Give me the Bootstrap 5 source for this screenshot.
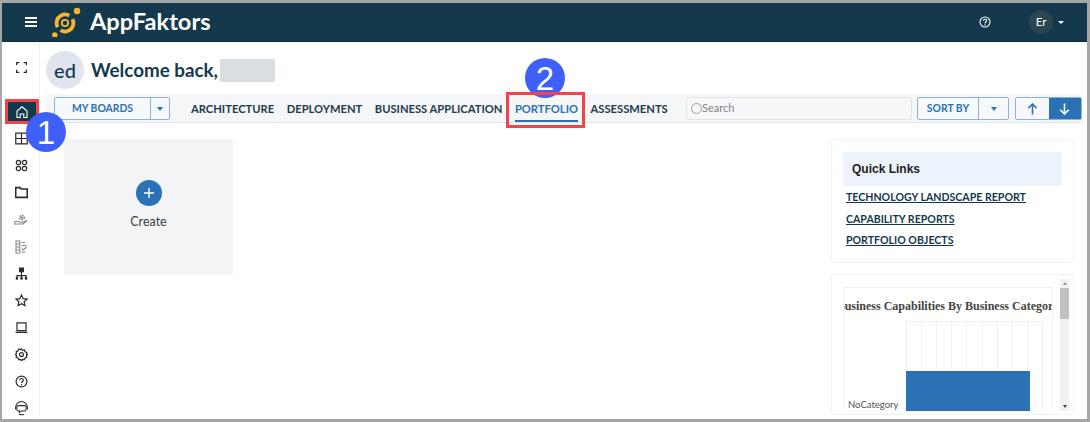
<!DOCTYPE html>
<html lang="en">
<head>
<meta charset="utf-8">
<title>AppFaktors</title>
<link href="https://cdn.jsdelivr.net/npm/bootstrap@5.3.0/dist/css/bootstrap.min.css" rel="stylesheet">
<style>
html,body{margin:0;height:422px;overflow:hidden;background:#fff;font-family:"Lato","Liberation Sans",sans-serif;color:#14394d}
.frame{height:422px;border-style:solid;border-color:#a6a6a6;border-width:3px 3px 3px 2px;display:flex;flex-direction:column;overflow:hidden;position:relative}
.topbar{height:39px;flex:none;background:#14394d;border-bottom:1px solid #0c2a3a;color:#fff;padding:0 0 0 23px}
.burger{width:12px;height:10px;border-top:2px solid #fff;border-bottom:2px solid #fff;position:relative;margin-right:15px}
.burger::after{content:"";position:absolute;left:0;right:0;top:2px;height:2px;background:#fff}
.brand{font-size:23.6px;font-weight:700;margin-left:8px;line-height:1}
.helpico{margin-right:38px}
.er{width:24px;height:24px;border-radius:50%;background:#2c4553;font-size:11.5px;margin-right:5px}
.caretw{width:0;height:0;border-left:3px solid transparent;border-right:3px solid transparent;border-top:3px solid #fff;margin-right:23px}
.bodyrow{flex:1;min-height:0}
.rail{width:38px;flex:none;border-right:1px solid #eef0f2;padding-top:12px}
.railbtn{width:30px;height:27px;margin-left:4px;flex:none}
.railbtn svg{width:13px;height:13px;fill:none;stroke:#2b2b2b;stroke-width:1.1}
.railbtn.faded svg{stroke:#8a8a8a;width:14px;height:14px}
.railbtn svg.hs{width:15px;height:15px;stroke-width:1}
.railgap{height:17px;flex:none}
.railbtn.act{background:#14394d;height:19px;width:28px;margin:4px 0 4px 6px;outline:3px solid #f0444c}
.railbtn.act svg{stroke:#fff;width:14px;height:14px}
.mainp{flex:1;min-width:0;padding:9px 5px 0 6px}
.welc{height:38px;margin-bottom:5px}
.ava{width:38px;height:38px;border-radius:50%;background:#e0e4ee;font-size:20px;font-weight:500;margin-right:7px}
.wtitle{font-size:18.8px;font-weight:700;margin:0;color:#14394d;line-height:1}
.blurname{width:55px;height:23px;background:#d9dee0;margin-left:2px}
.tabbar{height:29px;background:#f4f6f8;border-bottom:1px solid #e2e4e7;padding:0 0 0 8px}
.splitb{height:23px;margin-top:1px;border:1px solid #8db2d4;border-radius:2px;background:#f7f8fa;color:#2a72b5;font-size:10.4px;font-weight:700}
.splitb span{display:flex;align-items:center;justify-content:center;height:100%}
.splitb .lbl{border-right:1px solid #8db2d4}
.caretb{width:0;height:0;border-left:3.5px solid transparent;border-right:3.5px solid transparent;border-top:4px solid #2a72b5}
.mb{width:116px;margin-right:21px}.mb .lbl{width:96px}.mb .drp{width:18px}
.tablnk{font-size:11.2px;font-weight:700;color:#1d3b4c;text-decoration:none;margin-right:12.5px;white-space:nowrap;height:28px;line-height:29px;position:relative}
.tablnk.cur{color:#2a72b5}
.tablnk.cur::after{content:"";position:absolute;left:0;right:0;bottom:0;height:2px;background:#2a72b5}
.srch{width:226px;height:23px;margin-top:1px;border:1px solid #dfe2e6;border-radius:2px;background:#f7f8fa;margin-left:auto;font-size:11px;color:#7d8489;padding-left:4px}
.srch i{display:block;width:11px;height:11px;border:1px solid #9a9fa3;border-radius:50%}
.sb{width:92px;margin-left:5px;margin-right:6px}.sb .lbl{width:61px;flex:none}.sb .drp{flex:1}
.arr{width:67px;overflow:hidden}.arr span{width:50%}
.arr .on{background:#2a72b5}
.arr svg{width:11px;height:12px;fill:none;stroke:#2a72b5;stroke-width:1.6}
.arr .on svg{stroke:#fff}
.pane{padding:16px 8px 0 18px}
.createc{width:169px;height:136px;background:#f3f4f6;border-radius:3px;font-size:12.5px;color:#3b3f44;padding-bottom:3px}
.plus{width:26px;height:26px;border-radius:50%;background:#2a72b5;color:#fff;margin-bottom:7px}
.plus svg{width:10px;height:10px;stroke:#fff;stroke-width:1.4}
.side{width:243px}
.panelc{border:1px solid #f1f2f4;border-radius:3px;background:#fff}
.ql{height:124px;padding:12px 11px;margin-bottom:11px}
.qlh{background:#edf3fc;height:34px;font-family:"Liberation Sans",sans-serif;font-weight:700;font-size:12px;color:#1c1c1c;padding:0 9px;line-height:34px;margin-bottom:1px}
.ql a{display:block;font-size:10.6px;font-weight:700;color:#14394d;line-height:21.5px;padding-left:3px;white-space:nowrap}
.chartc{height:141px;padding:12px 4px 0 11px;position:relative;overflow:hidden}
.chbox{width:210px;height:124px;border:1px solid #f1f2f6;border-bottom:0;overflow:hidden;position:relative;flex:none}
.chtitle{font-family:"Liberation Serif",serif;font-weight:700;font-size:12px;color:#444;white-space:nowrap;text-align:center;margin:10px -30px 0;line-height:16px}
.plot{position:absolute;left:62px;top:33px;width:137px;bottom:0;border-top:1px solid #f1f2f4}
.gl{position:absolute;inset:0;display:flex;justify-content:space-between}
.gl i{display:block;width:1px;background:#eef0f2}
.barr{position:absolute;left:0;bottom:0;width:124px;height:40px;background:#2a72b5}
.nocat{position:absolute;left:4px;bottom:0;font-size:9.5px;color:#555;line-height:12px}
.sbar{width:9px;height:132px;background:#f1f1f1;margin:-8px 0 0 7px;position:relative;flex:none}
.sbar i{position:absolute;left:0;right:0;top:9px;height:31px;background:#c1c1c1}
.sbar::before{content:"";position:absolute;left:2.5px;top:3px;border:2px solid transparent;border-top:0;border-bottom:3px solid #999}
.sbar::after{content:"";position:absolute;left:2.5px;bottom:3px;border:2px solid transparent;border-bottom:0;border-top:3px solid #444}
.callout{position:absolute;border-radius:50%;background:#3f5ffb;color:#fff;width:40px;height:40px;font-family:"Liberation Sans",sans-serif;font-size:33px;display:flex;align-items:center;justify-content:center;z-index:5;line-height:1}
.c1{left:24px;top:109px}.c2{left:523px;top:55px}
.redbox{position:absolute;left:504px;top:89px;width:79px;height:36px;border:3px solid #f0444c;z-index:6}
</style>
</head>
<body>
<div class="frame">
  <nav class="topbar d-flex align-items-center">
    <div class="burger"></div>
    <svg width="30" height="30" viewBox="0 0 30 30"><circle cx="13" cy="16" r="8.5" fill="none" stroke="#fbb52b" stroke-width="3.8" stroke-dasharray="22 4.7" transform="rotate(151 13 16)"/><circle cx="13" cy="16" r="3.2" fill="none" stroke="#fbb52b" stroke-width="1.8"/><circle cx="25" cy="4" r="3.2" fill="#fbb52b"/><circle cx="2.800" cy="28" r="2.700" fill="#fbb52b"/></svg>
    <span class="brand">AppFaktors</span>
    <div class="ms-auto d-flex align-items-center">
      <svg class="helpico" width="12" height="12" viewBox="0 0 12 12" fill="none" stroke="#fff" stroke-width="1.1"><circle cx="6" cy="6" r="5"/><path d="M4.4 4.8c0-2.1 3.3-2.1 3.3 0 0 1.2-1.7 1.3-1.7 2.6"/><path d="M6 8.3v1.1"/></svg>
      <div class="er d-flex align-items-center justify-content-center">Er</div>
      <div class="caretw"></div>
    </div>
  </nav>
  <div class="bodyrow d-flex">
    <aside class="rail d-flex flex-column">
      <div class="railbtn d-flex align-items-center justify-content-center"><svg viewBox="0 0 12 12"><path d="M1.5 4V1.5h2.500M8 1.500h2.500V4M10.500 8v2.500H8M4 10.500H1.500V8"/></svg></div>
      <div class="railgap"></div>
      <div class="railbtn act d-flex align-items-center justify-content-center"><svg viewBox="0 0 14 14"><path d="M2 12.500V6L7 1.800 12 6v6.500H8.800V9H5.200v3.500z"/></svg></div>
      <div class="railbtn d-flex align-items-center justify-content-center"><svg viewBox="0 0 12 12"><path d="M.7 1h10.600v10H.7zM.7 6h10.600M6 1v10"/></svg></div>
      <div class="railbtn d-flex align-items-center justify-content-center"><svg viewBox="0 0 12 12"><circle cx="3.200" cy="3.200" r="2"/><circle cx="8.800" cy="3.200" r="2"/><circle cx="3.200" cy="8.800" r="2"/><circle cx="8.800" cy="8.800" r="2"/></svg></div>
      <div class="railbtn d-flex align-items-center justify-content-center"><svg viewBox="0 0 12 12"><path d="M.7 1.500h4l1 1.200h5.600v7.800H.7z" stroke-width="1.400"/></svg></div>
      <div class="railbtn faded d-flex align-items-center justify-content-center"><svg viewBox="0 0 14 14"><circle cx="8" cy="4.500" r="2.300" stroke-dasharray="1.600 .8" stroke-width="1.400"/><circle cx="8" cy="4.500" r=".8"/><path d="M.8 8.500h3.200l2 .8h2.500l4.500-1.800-4 3.500H4l-3.200 .2z"/></svg></div>
      <div class="railbtn faded d-flex align-items-center justify-content-center"><svg viewBox="0 0 14 14"><path d="M2 1h3.800v12H2zM2 4h3.800M2 7h3.800M2 10h3.800M7.500 2.500h3.500M7.500 5.500h5M8 8.500l1.500 1.500 3-3M7.500 12h4"/></svg></div>
      <div class="railbtn d-flex align-items-center justify-content-center"><svg viewBox="0 0 12 12"><path d="M4.200 1h3.600v3.400H4.200z" fill="#2b2b2b"/><path d="M6 4.500V8M1.800 10V8h8.400v2M6 8v2"/><circle cx="1.800" cy="10.500" r=".7" fill="#2b2b2b"/><circle cx="6" cy="10.500" r=".7" fill="#2b2b2b"/><circle cx="10.200" cy="10.500" r=".7" fill="#2b2b2b"/></svg></div>
      <div class="railbtn d-flex align-items-center justify-content-center"><svg viewBox="0 0 12 12"><path d="M6 1l1.500 3.300 3.600.4-2.700 2.400.8 3.600L6 8.900l-3.200 1.800.8-3.600L.9 4.700l3.600-.4z"/></svg></div>
      <div class="railbtn d-flex align-items-center justify-content-center"><svg viewBox="0 0 12 12"><path d="M1.800 1.800h8.400v7H1.800zM.5 10.500h11"/></svg></div>
      <div class="railbtn d-flex align-items-center justify-content-center"><svg viewBox="0 0 12 12"><path d="M6 .8l1 1.300 1.700-.3.600 1.600 1.600.6-.3 1.700 1 .3-1 .9.3 1.700-1.600.6-.6 1.600-1.700-.3-1 1.200-1-1.200-1.700.3-.6-1.600-1.600-.6.3-1.700-1-.9 1-1-.3-1.700 1.600-.6.6-1.600 1.700.3z"/><circle cx="6" cy="6" r="1.800"/></svg></div>
      <div class="railbtn d-flex align-items-center justify-content-center"><svg viewBox="0 0 12 12"><circle cx="6" cy="6" r="5"/><path d="M4.400 4.800c0-2.100 3.300-2.100 3.300 0 0 1.200-1.700 1.300-1.700 2.600M6 8.300v1.100"/></svg></div>
      <div class="railbtn d-flex align-items-center justify-content-center"><svg class="hs" viewBox="0 0 14 14"><path d="M1.500 8V6a5.500 5.500 0 0 1 11 0v2"/><path d="M4 4.300h6a1.300 1.300 0 0 1 1.300 1.300v2.400A1.300 1.300 0 0 1 10 9.300H6.500L5 10.800V9.300H4A1.300 1.300 0 0 1 2.700 8V5.600A1.300 1.300 0 0 1 4 4.300z"/><path d="M4.500 12.700h5"/></svg></div>
    </aside>
    <main class="mainp">
      <div class="welc d-flex align-items-center">
        <div class="ava d-flex align-items-center justify-content-center">ed</div>
        <h1 class="wtitle">Welcome back,</h1>
        <div class="blurname"></div>
      </div>
      <div class="tabbar d-flex align-items-center">
        <div class="splitb mb d-flex"><span class="lbl">MY BOARDS</span><span class="drp"><i class="caretb"></i></span></div>
        <a class="tablnk" href="#">ARCHITECTURE</a>
        <a class="tablnk" href="#">DEPLOYMENT</a>
        <a class="tablnk" href="#">BUSINESS APPLICATION</a>
        <a class="tablnk cur" href="#">PORTFOLIO</a>
        <a class="tablnk" href="#">ASSESSMENTS</a>
        <div class="srch d-flex align-items-center"><i></i>Search</div>
        <div class="splitb sb d-flex"><span class="lbl">SORT BY</span><span class="drp"><i class="caretb"></i></span></div>
        <div class="splitb arr d-flex">
          <span><svg viewBox="0 0 11 12"><path d="M5.500 11.500V1M1.300 5.200l4.200-4.200 4.200 4.200"/></svg></span>
          <span class="on"><svg viewBox="0 0 11 12"><path d="M5.500.5V11M1.300 6.800L5.500 11l4.200-4.200"/></svg></span>
        </div>
      </div>
      <div class="pane d-flex justify-content-between align-items-start">
        <div class="createc d-flex flex-column align-items-center justify-content-center">
          <div class="plus d-flex align-items-center justify-content-center"><svg viewBox="0 0 10 10"><path d="M5 0v10M0 5h10"/></svg></div>
          <div>Create</div>
        </div>
        <div class="side">
          <div class="panelc ql">
            <div class="qlh">Quick Links</div>
            <a href="#">TECHNOLOGY LANDSCAPE REPORT</a>
            <a href="#">CAPABILITY REPORTS</a>
            <a href="#">PORTFOLIO OBJECTS</a>
          </div>
          <div class="panelc chartc d-flex">
            <div class="chbox">
              <div class="chtitle">Business Capabilities By Business Category</div>
              <div class="plot"><div class="gl"><i></i><i></i><i></i><i></i><i></i><i></i><i></i><i></i><i></i><i></i></div><div class="barr"></div></div>
              <div class="nocat">NoCategory</div>
            </div>
            <div class="sbar"><i></i></div>
          </div>
        </div>
      </div>
    </main>
  </div>
  <div class="redbox"></div>
  <div class="callout c1">1</div>
  <div class="callout c2">2</div>
</div>
</body>
</html>
